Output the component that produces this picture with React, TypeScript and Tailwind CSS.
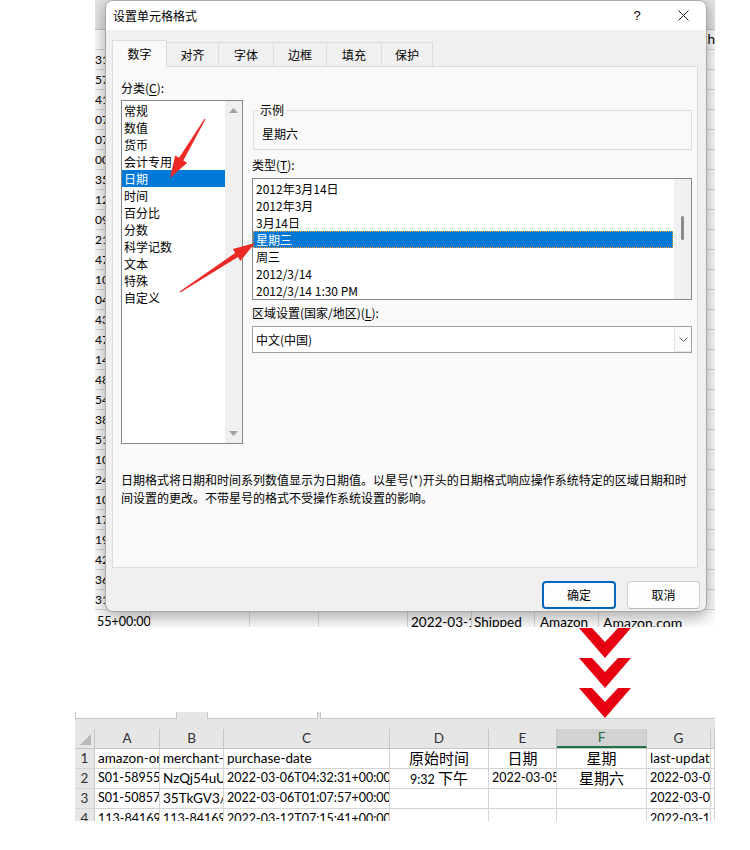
import React from "react";

const frags = ["31","57","41","07","07","00","35","12","09","21","47","10","04","43","47","14","48","54","38","51","10","24","10","17","19","42","36","31"];

const categories = ["常规","数值","货币","会计专用","日期","时间","百分比","分数","科学记数","文本","特殊","自定义"];
const types = ["2012年3月14日","2012年3月","3月14日","星期三","周三","2012/3/14","2012/3/14 1:30 PM"];
const tabs: [string, string][] = [["数字","w-[55px]"],["对齐","w-[52px]"],["字体","w-[55px]"],["边框","w-[53px]"],["填充","w-[55px]"],["保护","w-[51px]"]];

function TopSheet() {
  return (
    <div className="flex flex-col font-['Lato','Noto_Sans_CJK_SC',sans-serif] text-[13.5px] text-black">
      <div className="h-[30px] bg-[#e6e6e6] border-b border-[#c6c6c6]" />
      <div className="h-[20px] border-b border-[#dadada] flex items-center justify-end leading-none">ch</div>
      {frags.map((f, i) => (
        <div key={i} className="h-[20px] border-b border-[#dadada] flex items-center leading-none whitespace-nowrap text-[12px]">
          {f}:07+00:00
        </div>
      ))}
      <div className="h-[20px] flex leading-none whitespace-nowrap">
        <div className="w-[56px] h-full border-r border-[#dadada] pl-[2px] pt-[5px] flex items-center overflow-hidden text-[12.5px]">55+00:00</div>
        <div className="w-[99px] h-full border-r border-[#dadada]" />
        <div className="w-[69px] h-full border-r border-[#dadada]" />
        <div className="w-[89px] h-full border-r border-[#dadada]" />
        <div className="w-[64px] h-full border-r border-[#dadada] pl-[3px] pt-[5px] flex items-center overflow-hidden">2022-03-12T</div>
        <div className="w-[63px] h-full border-r border-[#dadada] pl-[2px] pt-[5px] flex items-center overflow-hidden">Shipped</div>
        <div className="w-[64px] h-full border-r border-[#dadada] pl-[5px] pt-[5px] flex items-center overflow-hidden">Amazon</div>
        <div className="flex-1 h-full pl-[4px] pt-[5px] flex items-center overflow-hidden text-[14px]">Amazon.com</div>
      </div>
    </div>
  );
}

function Dialog() {
  return (
    <div className="absolute left-[10px] top-0 w-[602px] h-[612px] rounded-[8px] border border-[#a8a8a8] bg-[#f0f0f0] shadow-[0_4px_18px_rgba(0,0,0,0.38)] overflow-hidden flex flex-col font-['Noto_Sans_CJK_SC',sans-serif] text-[12px] text-black">
      {/* title bar */}
      <div className="h-[29px] bg-white flex items-center">
        <div className="flex-1 pl-[7px] leading-[16px]">设置单元格格式</div>
        <div className="w-[46px] h-full flex items-center justify-center font-['Liberation_Sans',sans-serif] text-[13px]">?</div>
        <div className="w-[46px] h-full flex items-center justify-center">
          <svg width="11" height="11" viewBox="0 0 11 11">
            <path d="M0.5 0.5 L10.5 10.5 M10.5 0.5 L0.5 10.5" stroke="#1a1a1a" strokeWidth="1" fill="none" />
          </svg>
        </div>
      </div>
      {/* body */}
      <div className="flex-1 flex flex-col pl-[6px] pr-[6px] pt-[11px]">
        {/* tabs */}
        <div className="flex items-end h-[26px] relative z-10 -mb-[1px]">
          {tabs.map(([t, w], i) =>
            i === 0 ? (
              <div key={t} className={`${w} h-[27px] bg-[#f9f9f9] border border-b-0 border-[#dcdcdc] flex items-center justify-center leading-[16px]`}>{t}</div>
            ) : (
              <div key={t} className={`${w} h-[25px] bg-[#f0f0f0] border-t border-r border-[#dcdcdc] border-b border-b-[#dcdcdc] flex items-center justify-center leading-[16px]`}>{t}</div>
            )
          )}
        </div>
        {/* panel */}
        <div className="mr-[2px] h-[502px] bg-[#f9f9f9] border border-[#dcdcdc] flex flex-col">
          <div className="flex pl-[8px] pt-[13px]">
            {/* left column */}
            <div className="w-[122px] flex flex-col">
              <div className="leading-[16px]">分类(<span className="underline underline-offset-2">C</span>):</div>
              <div className="mt-[4px] h-[344px] bg-white border border-[#828790] flex">
                <div className="flex-1 flex flex-col pt-[1px]">
                  {categories.map((c) => (
                    <div key={c} className={c === "日期" ? "h-[17px] leading-[17px] pl-[2px] bg-[#0078d7] text-white" : "h-[17px] leading-[17px] pl-[2px]"}>{c}</div>
                  ))}
                </div>
                <div className="w-[17px] bg-[#f0f0f0] flex flex-col items-center justify-between pt-[7px] pb-[7px]">
                  <svg width="9" height="5" viewBox="0 0 9 5"><polygon points="0,5 4.5,0 9,5" fill="#a3a3a3" /></svg>
                  <svg width="9" height="5" viewBox="0 0 9 5"><polygon points="0,0 9,0 4.5,5" fill="#a3a3a3" /></svg>
                </div>
              </div>
            </div>
            {/* right column */}
            <div className="ml-[9px] w-[440px] flex flex-col pt-[22px]">
              <fieldset className="h-[48px] border border-[#dcdcdc] ml-[1px] pl-[7px]">
                <legend className="ml-[-3px] px-[2px] leading-[16px]">示例</legend>
                <div className="leading-[16px] pt-[8px] pl-[1px]">星期六</div>
              </fieldset>
              <div className="mt-[7px] leading-[16px]">类型(<span className="underline underline-offset-2">T</span>):</div>
              <div className="mt-[5px] h-[122px] bg-white border border-[#828790] flex">
                <div className="flex-1 flex flex-col pt-[1px]">
                  {types.map((t) => (
                    <div key={t} className={t === "星期三" ? "h-[17px] leading-[15px] pl-[2px] bg-[#0078d7] text-white border border-dotted border-[#e59a3c] mr-[1px]" : "h-[17px] leading-[17px] pl-[3px]"}>{t}</div>
                  ))}
                </div>
                <div className="w-[17px] bg-[#f0f0f0] flex justify-center pt-[37px]">
                  <div className="w-[3px] h-[24px] rounded-full bg-[#8a8a8a]" />
                </div>
              </div>
              <div className="mt-[5px] leading-[16px]">区域设置(国家/地区)(<span className="underline underline-offset-2">L</span>):</div>
              <div className="mt-[5px] h-[27px] bg-white border border-[#a0a0a0] flex items-center">
                <div className="flex-1 pl-[3px] leading-[16px]">中文(中国)</div>
                <div className="w-[17px] h-full bg-[#fbfbfb] border-l border-b border-[#e5e5e5] flex items-center justify-center">
                  <svg width="9" height="5" viewBox="0 0 9 5"><polyline points="0.5,0.5 4.5,4.5 8.5,0.5" fill="none" stroke="#606060" strokeWidth="1" /></svg>
                </div>
              </div>
            </div>
          </div>
          <div className="mt-[27px] pl-[8px] leading-[18px] whitespace-nowrap">
            日期格式将日期和时间系列数值显示为日期值。以星号(*)开头的日期格式响应操作系统特定的区域日期和时<br />
            间设置的更改。不带星号的格式不受操作系统设置的影响。
          </div>
        </div>
        {/* buttons */}
        <div className="mt-[13px] flex justify-end gap-[11px]">
          <div className="w-[74px] h-[28px] rounded-[4px] bg-[#fdfdfd] border-2 border-[#0067c0] flex items-center justify-center leading-[16px]">确定</div>
          <div className="w-[73px] h-[28px] rounded-[4px] bg-[#fdfdfd] border border-[#d0d0d0] border-b-[#b8b8b8] flex items-center justify-center leading-[16px]">取消</div>
        </div>
      </div>
    </div>
  );
}

const cols = ["w-[20px]","w-[65px]","w-[64px]","w-[166px]","w-[99px]","w-[68px]","w-[90px]","w-[64px]","w-[4px]"];

function Cell({ w, children, center, cn, word }: { w: string; children?: React.ReactNode; center?: boolean; cn?: boolean; word?: boolean }) {
  return (
    <div className={`${w} h-full shrink-0 border-r border-[#d4d4d4] overflow-hidden whitespace-nowrap flex items-center ${center ? "justify-center" : "pl-[3px]"} ${cn ? "text-[15px]" : word ? "text-[13.5px]" : ""}`}>
      {children}
    </div>
  );
}

function RowHead({ n }: { n: string }) {
  return (
    <div className="w-[20px] h-full shrink-0 border-r border-[#c6c6c6] bg-[#e6e6e6] flex items-center justify-center text-[13.5px] text-[#333]">{n}</div>
  );
}

function BottomSheet() {
  return (
    <div className="ml-[75px] w-[640px] flex flex-col font-['Lato','Noto_Sans_CJK_SC',sans-serif] text-[12.5px] text-black">
      <div className="h-[7px] flex bg-[#e6e6e6]">
        <div className="w-[102px] bg-white border-x border-b border-[#c6c6c6]" />
        <div className="w-[30px]" />
        <div className="w-[111px] bg-white border-x border-b border-[#c6c6c6]" />
        <div className="w-[2px]" />
        <div className="flex-1 bg-white border-l border-b border-[#c6c6c6]" />
      </div>
      <div className="h-[10px] bg-[#e6e6e6]" />
      {/* column header */}
      <div className="h-[20px] flex bg-[#e6e6e6] border-b border-[#c6c6c6] text-[13.5px] text-[#333]">
        <div className="w-[20px] h-full border-r border-[#c6c6c6] flex items-end justify-end p-[3px]">
          <svg width="11" height="11" viewBox="0 0 11 11"><polygon points="11,0 11,11 0,11" fill="#b8b8b8" /></svg>
        </div>
        {["A","B","C","D","E","F","G",""].map((l, i) => (
          <div key={i} className={`${cols[i + 1]} h-full shrink-0 border-r border-[#c6c6c6] flex items-center justify-center leading-none ${l === "F" ? "bg-[#d2d2d2] border-b-2 border-b-[#217346] text-[#217346]" : ""}`}>{l}</div>
        ))}
      </div>
      {/* row 1 */}
      <div className="h-[20px] flex border-b border-[#d4d4d4] leading-none">
        <RowHead n="1" />
        <Cell w={cols[1]} word>amazon-order-id</Cell>
        <Cell w={cols[2]} word>merchant-order-id</Cell>
        <Cell w={cols[3]} word>purchase-date</Cell>
        <Cell w={cols[4]} center cn>原始时间</Cell>
        <Cell w={cols[5]} center cn>日期</Cell>
        <Cell w={cols[6]} center cn>星期</Cell>
        <Cell w={cols[7]} word>last-updated-date</Cell>
        <Cell w={cols[8]} />
      </div>
      {/* row 2 */}
      <div className="h-[20px] flex border-b border-[#d4d4d4] leading-none">
        <RowHead n="2" />
        <Cell w={cols[1]}>S01-5895551</Cell>
        <Cell w={cols[2]} word>NzQj54uUx</Cell>
        <Cell w={cols[3]}>2022-03-06T04:32:31+00:00</Cell>
        <Cell w={cols[4]} center><span>9:32 <span className="text-[15px]">下午</span></span></Cell>
        <Cell w={cols[5]}>2022-03-05</Cell>
        <Cell w={cols[6]} center cn>星期六</Cell>
        <Cell w={cols[7]}>2022-03-07T</Cell>
        <Cell w={cols[8]} />
      </div>
      {/* row 3 */}
      <div className="h-[20px] flex border-b border-[#d4d4d4] leading-none">
        <RowHead n="3" />
        <Cell w={cols[1]}>S01-5085702</Cell>
        <Cell w={cols[2]} word>35TkGV3/:x</Cell>
        <Cell w={cols[3]}>2022-03-06T01:07:57+00:00</Cell>
        <Cell w={cols[4]} />
        <Cell w={cols[5]} />
        <Cell w={cols[6]} />
        <Cell w={cols[7]}>2022-03-08T</Cell>
        <Cell w={cols[8]} />
      </div>
      {/* row 4 (cut) */}
      <div className="h-[12px] overflow-hidden">
        <div className="h-[20px] flex leading-none">
          <RowHead n="4" />
          <Cell w={cols[1]}>113-8416912</Cell>
          <Cell w={cols[2]}>113-8416912</Cell>
          <Cell w={cols[3]}>2022-03-12T07:15:41+00:00</Cell>
          <Cell w={cols[4]} />
          <Cell w={cols[5]} />
          <Cell w={cols[6]} />
          <Cell w={cols[7]}>2022-03-12T</Cell>
          <Cell w={cols[8]} />
        </div>
      </div>
    </div>
  );
}

export default function App() {
  return (
    <div className="relative w-[750px] h-[850px] bg-white overflow-hidden">
      {/* top screenshot */}
      <div className="relative ml-[95px] w-[620px] h-[627px] overflow-hidden bg-white">
        <TopSheet />
        <Dialog />
      </div>
      {/* chevrons */}
      <div className="relative z-10 h-[85px] ml-[579px]">
        <svg width="52" height="92" viewBox="0 0 52 92" className="overflow-visible">
          <polygon points="0,0 13,0 26,14 39,0 52,0 26,30" fill="#e60012" transform="translate(0,1)" />
          <polygon points="0,0 13,0 26,14 39,0 52,0 26,30" fill="#e60012" transform="translate(0,31)" />
          <polygon points="0,0 13,0 26,14 39,0 52,0 26,30" fill="#e60012" transform="translate(0,61)" />
        </svg>
      </div>
      <BottomSheet />
      {/* red annotation arrows */}
      <svg className="absolute left-0 top-0 pointer-events-none" width="750" height="850" viewBox="0 0 750 850">
        <polygon points="205.5,119.3 183.4,160.4 187.2,162.7 170,178 175.2,155.5 179.1,157.8 204.5,118.7" fill="#ec2a25" />
        <polygon points="180.3,292.5 238.0,257.1 240.4,260.9 255,243 232.8,249.1 235.2,252.9 179.7,291.5" fill="#ec2a25" />
      </svg>
    </div>
  );
}
